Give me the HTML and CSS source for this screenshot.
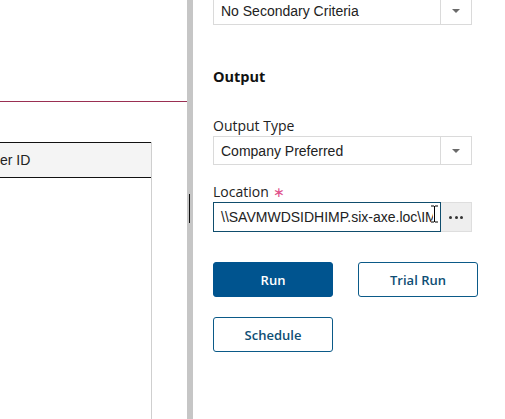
FILE: index.html
```html
<!DOCTYPE html>
<html>
<head>
<meta charset="utf-8">
<link rel="stylesheet" href="styles.css">
</head>
<body>
<div class="layout">
  <div class="left">
    <div class="left-top"></div>
    <div class="grid">
      <div class="grid-head">er ID</div>
      <div class="grid-body"></div>
    </div>
  </div>
  <div class="splitter"><span class="handle"></span></div>
  <div class="right">
    <div class="select first">
      <span class="select-value">No Secondary Criteria</span>
      <span class="select-arrow"><span class="tri"></span></span>
    </div>
    <h3 class="section">Output</h3>
    <label class="label">Output Type</label>
    <div class="select">
      <span class="select-value">Company Preferred</span>
      <span class="select-arrow"><span class="tri"></span></span>
    </div>
    <label class="label loc">Location <span class="req">&#x2217;</span></label>
    <div class="path">
      <div class="path-input"><span class="path-text">\\SAVMWDSIDHIMP.six-axe.loc\IM</span>
        <svg class="ibeam" width="9" height="18" viewBox="0 0 9 18"><path d="M1 1h3M5 1h3M4.5 1v16M1 17h3M5 17h3" stroke="#fff" stroke-width="3" fill="none"/><path d="M1 1h3M5 1h3M4.5 1v16M1 17h3M5 17h3" stroke="#000" stroke-width="1" fill="none"/></svg>
      </div>
      <div class="path-btn"><span class="dot"></span><span class="dot"></span><span class="dot"></span></div>
    </div>
    <div class="actions">
      <button class="btn primary">Run</button>
      <button class="btn">Trial Run</button>
      <button class="btn">Schedule</button>
    </div>
  </div>
</div>
</body>
</html>
```

FILE: styles.css
```css
html, body {
  margin: 0;
  padding: 0;
  background: #fff;
  overflow: hidden;
}
.layout {
  display: flex;
  width: 505px;
  height: 419px;
}
.left {
  width: 187px;
  flex: none;
  overflow: hidden;
}
.left-top {
  height: 101px;
  border-bottom: 1px solid #9a2f52;
}
.grid {
  margin-top: 40px;
  width: 151px;
  height: 300px;
  border-right: 1px solid #cfcfcf;
}
.grid-head {
  height: 34px;
  border-top: 1px solid #111;
  border-bottom: 1px solid #111;
  background: #f4f4f4;
  font-family: "Liberation Sans", Arial, sans-serif;
  font-size: 14px;
  color: #222;
  line-height: 35px;
}
.splitter {
  width: 6px;
  flex: none;
  background: #c6c6c6;
  position: relative;
}
.handle {
  position: absolute;
  left: 2px;
  top: 194px;
  width: 1px;
  height: 29px;
  background: #111;
}
.right {
  flex: 1;
  padding-left: 20px;
  display: flex;
  flex-direction: column;
  align-items: flex-start;
}
.select {
  width: 259px;
  height: 29px;
  box-sizing: border-box;
  border: 1px solid #dadada;
  display: flex;
  align-items: center;
}
.select.first {
  margin-top: -4px;
}
.select-value {
  flex: 1;
  padding-left: 7px;
  font-family: "Liberation Sans", Arial, sans-serif;
  font-size: 14px;
  color: #222;
}
.select-arrow {
  width: 30px;
  height: 100%;
  border-left: 1px solid #dadada;
  display: flex;
  align-items: center;
  justify-content: center;
}
.tri {
  width: 0;
  height: 0;
  border-left: 4px solid transparent;
  border-right: 4px solid transparent;
  border-top: 4px solid #6a6a6a;
}
.section {
  margin: 42px 0 0 0;
  font-family: "Open Sans", sans-serif;
  font-weight: 700;
  font-size: 14.5px;
  line-height: 20px;
  color: #111;
}
.label {
  margin-top: 29px;
  font-family: "Open Sans", sans-serif;
  font-size: 14px;
  line-height: 20px;
  color: #222;
}
.label.loc {
  margin-top: 17px;
}
.req {
  color: #e0508a;
  font-size: 14px;
  margin-left: 1px;
}
.path {
  display: flex;
  width: 259px;
  height: 30px;
}
.path-input {
  position: relative;
  width: 228px;
  box-sizing: border-box;
  border: 1px solid #0f4d6d;
  display: flex;
  align-items: center;
  padding-left: 7px;
  font-family: "Liberation Sans", Arial, sans-serif;
  font-size: 14px;
  color: #222;
}
.path-text {
  white-space: nowrap;
}
.ibeam {
  position: absolute;
  left: 216px;
  top: 2px;
}
.path-btn {
  width: 31px;
  box-sizing: border-box;
  background: #eeeeee;
  border: 1px solid #dedede;
  border-left: none;
  display: flex;
  align-items: center;
  justify-content: center;
  gap: 2.5px;
}
.dot {
  width: 3px;
  height: 3px;
  border-radius: 50%;
  background: #333;
}
.actions {
  margin-top: 30px;
  display: grid;
  grid-template-columns: 120px 120px;
  column-gap: 25px;
  row-gap: 20px;
}
.btn {
  height: 35px;
  box-sizing: border-box;
  border: 1px solid #0b5a88;
  border-radius: 3px;
  background: #fff;
  color: #0e4e74;
  font-family: "Open Sans", sans-serif;
  font-weight: 600;
  font-size: 13px;
  padding: 0;
  margin: 0;
}
.btn.primary {
  background: #00548f;
  border-color: #00548f;
  color: #fff;
}
```
